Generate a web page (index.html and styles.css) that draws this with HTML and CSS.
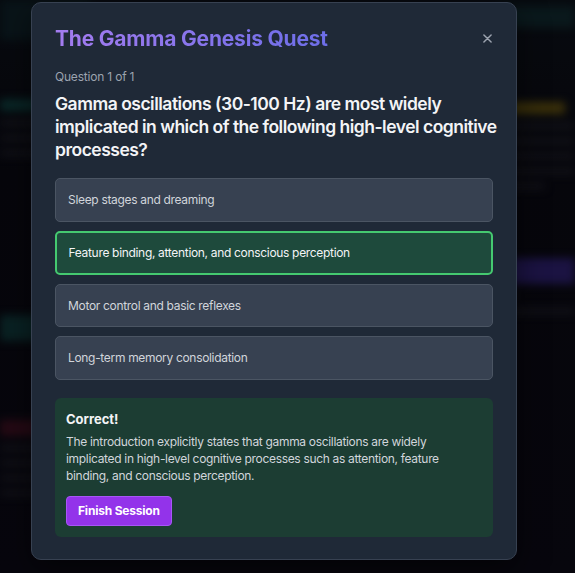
FILE: index.html
```html
<!DOCTYPE html>
<html lang="en">
<head>
<meta charset="utf-8">
<title>The Gamma Genesis Quest</title>
<link rel="stylesheet" href="styles.css">
</head>
<body>
<div class="backdrop">
  <div class="bg-page">
    <div class="bg-col bg-left">
      <div class="bg-top"></div>
      <div class="bg-title teal"></div>
      <div class="bg-line"></div>
      <div class="bg-line"></div>
      <div class="bg-line short"></div>
      <div class="bg-bar teal-bar"></div>
      <div class="bg-bar red-bar"></div>
      <div class="bg-line"></div>
      <div class="bg-line"></div>
      <div class="bg-line"></div>
      <div class="bg-line short"></div>
    </div>
    <div class="bg-col bg-right">
      <div class="bg-top"></div>
      <div class="bg-title yellow"></div>
      <div class="bg-line"></div>
      <div class="bg-line"></div>
      <div class="bg-line"></div>
      <div class="bg-line"></div>
      <div class="bg-line short"></div>
      <div class="bg-bar purple-bar"></div>
      <div class="bg-line tiny"></div>
      <div class="bg-line"></div>
    </div>
  </div>
</div>
<div class="overlay">
  <div class="modal">
    <div class="modal-header">
      <h2 class="modal-title">The Gamma Genesis Quest</h2>
      <button class="close-btn" aria-label="Close">
        <svg width="9" height="9" viewBox="0 0 10 10"><path d="M1 1L9 9M9 1L1 9" stroke="currentColor" stroke-width="1.6" stroke-linecap="round"/></svg>
      </button>
    </div>
    <p class="q-count">Question 1 of 1</p>
    <h3 class="q-text">Gamma oscillations (30-100 Hz) are most widely implicated in which of the following high-level cognitive processes?</h3>
    <div class="options">
      <div class="option">Sleep stages and dreaming</div>
      <div class="option correct">Feature binding, attention, and conscious perception</div>
      <div class="option">Motor control and basic reflexes</div>
      <div class="option">Long-term memory consolidation</div>
    </div>
    <div class="feedback">
      <h4 class="fb-title">Correct!</h4>
      <p class="fb-text">The introduction explicitly states that gamma oscillations are widely implicated in high-level cognitive processes such as attention, feature binding, and conscious perception.</p>
      <button class="finish-btn">Finish Session</button>
    </div>
  </div>
</div>
</body>
</html>
```

FILE: styles.css
```css
* { box-sizing: border-box; }
html, body { margin: 0; padding: 0; }
body {
  width: 575px;
  height: 573px;
  overflow: hidden;
  background: #0a0a12;
  font-family: Inter, "Noto Sans", "Liberation Sans", sans-serif;
  position: relative;
}
.backdrop {
  position: absolute;
  inset: 0;
  overflow: hidden;
  background: linear-gradient(180deg, #0c1018 0%, #0a0a12 30%, #0b0a14 100%);
}
.bg-page {
  display: flex;
  justify-content: space-between;
  height: 100%;
  filter: blur(4px);
}
.bg-col { display: flex; flex-direction: column; gap: 9px; }
.bg-left { width: 90px; }
.bg-right { width: 80px; }
.bg-top { height: 40px; background: #0e1f26; margin: 0 0 50px; }
.bg-right .bg-top { height: 22px; margin: 6px 0 65px; background: #10262b; }
.bg-title { height: 12px; width: 70px; }
.teal { background: #0f3c3c; }
.yellow { background: #5a4a10; }
.bg-line { height: 6px; width: 80px; background: #1c1c26; }
.bg-line.short { width: 50px; }
.bg-line.tiny { width: 20px; }
.bg-bar { height: 26px; }
.teal-bar { background: #0f3436; margin-top: 150px; }
.red-bar { background: #3a1020; margin-top: 70px; height: 16px; }
.purple-bar { background: #2a1e66; margin-top: 60px; height: 26px; }

.overlay {
  position: absolute;
  inset: 0;
  background: rgba(0, 0, 0, 0.35);
  padding: 2px 0 0 31px;
}
.modal {
  width: 486px;
  background: #1f2937;
  border: 1px solid #374151;
  border-radius: 10px;
  padding: 22px 23px 22px;
  box-shadow: 0 10px 30px rgba(0,0,0,0.5);
}
.modal-header {
  display: flex;
  justify-content: space-between;
  align-items: center;
}
.modal-title {
  margin: 0;
  font-size: 21px;
  line-height: 28px;
  letter-spacing: -0.2px;
  font-weight: 700;
  background: linear-gradient(90deg, #a47cf0, #6d6ee8);
  -webkit-background-clip: text;
  background-clip: text;
  color: transparent;
}
.close-btn {
  background: none;
  border: 0;
  padding: 0;
  margin: -2px 0 0 0;
  color: #9ca3af;
  width: 12px;
  height: 12px;
  display: flex;
  align-items: center;
  justify-content: center;
}
.q-count {
  margin: 16px 0 7px;
  font-size: 12px;
  line-height: 16px;
  letter-spacing: -0.2px;
  color: #9ca3af;
}
.q-text {
  margin: 0 -16px 17px 0;
  font-size: 17.5px;
  line-height: 23px;
  letter-spacing: -0.5px;
  font-weight: 600;
  color: #f3f4f6;
}
.options { display: flex; flex-direction: column; gap: 9px; }
.option {
  background: #374151;
  border: 1.5px solid #4b5563;
  border-radius: 5px;
  padding: 12px 12px;
  font-size: 12px;
  line-height: 17.5px;
  letter-spacing: -0.32px;
  color: #d1d5db;
}
.option.correct {
  background: #1e4a3c;
  border: 2px solid #45c970;
  padding: 11.5px 11.5px 11px;
  color: #f3f4f6;
}
.feedback {
  margin-top: 18px;
  background: #1c3d33;
  border-radius: 6px;
  padding: 12px 12px 11px 11px;
}
.fb-title {
  margin: 0 0 5px;
  font-size: 13px;
  line-height: 18px;
  font-weight: 700;
  color: #f3f4f6;
}
.fb-text {
  margin: 0 0 12px;
  font-size: 12px;
  line-height: 17px;
  letter-spacing: -0.32px;
  color: #d1d5db;
}
.finish-btn {
  background: #9333ea;
  border: 1px solid #a855f7;
  border-radius: 4px;
  color: #ffffff;
  font-family: inherit;
  font-size: 12px;
  font-weight: 700;
  padding: 6px 11px;
  line-height: 16px;
  letter-spacing: -0.2px;
}
```
